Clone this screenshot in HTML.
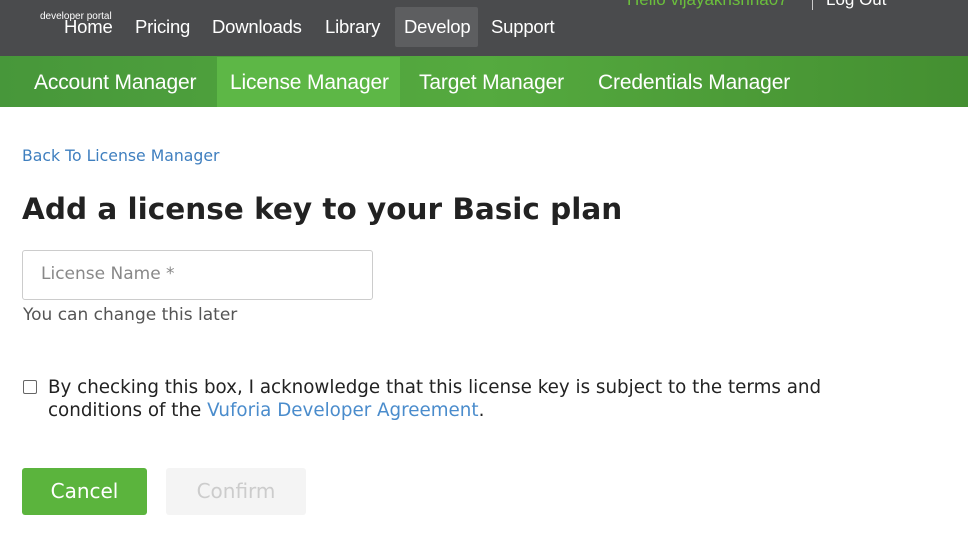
<!DOCTYPE html>
<html><head><meta charset="utf-8"><style>
body{margin:0;width:968px;height:546px;overflow:hidden;background:#fff;font-family:"DejaVu Sans",sans-serif;position:relative}
.top{position:absolute;left:0;top:0;width:968px;height:56px;background:#4a4b4d}
.g{position:absolute;left:0;top:56px;width:968px;height:51px;background:linear-gradient(90deg,#47973a,#55aa3f 50%,#448f31)}
.a{position:absolute;white-space:nowrap}
.nav{color:#fff;font-size:18.5px;top:16px;letter-spacing:-0.2px;font-family:"Liberation Sans",sans-serif}
.sub{color:#fff;font-size:21px;top:71px;letter-spacing:-0.15px;font-family:"Liberation Sans",sans-serif}
</style></head><body>
<div class="top"></div>
<div class="a" style="left:395px;top:7px;width:83px;height:40px;background:#5d5e60;border-radius:2px"></div>
<div class="a nav" style="left:64px">Home</div>
<div class="a" style="left:40px;top:11px;color:#fff;font-size:10px;font-family:'Liberation Sans',sans-serif">developer portal</div>
<div class="a nav" style="left:135px">Pricing</div>
<div class="a nav" style="left:212px">Downloads</div>
<div class="a nav" style="left:325px">Library</div>
<div class="a nav" style="left:404px">Develop</div>
<div class="a nav" style="left:491px">Support</div>
<div class="a" style="left:627px;top:-10px;color:#6bbf3c;font-size:17px;font-family:'Liberation Sans',sans-serif">Hello vijayakrishna07</div>
<div class="a" style="left:812px;top:0;width:1px;height:10px;background:#ccc"></div>
<div class="a" style="left:826px;top:-10px;color:#fff;font-size:17px;font-family:'Liberation Sans',sans-serif">Log Out</div>
<div class="g"></div>
<div class="a" style="left:217px;top:57px;width:183px;height:50px;background:#5db746"></div>
<div class="a sub" style="left:34px">Account Manager</div>
<div class="a sub" style="left:230px">License Manager</div>
<div class="a sub" style="left:419px">Target Manager</div>
<div class="a sub" style="left:598px">Credentials Manager</div>
<div class="a" style="left:22px;top:146px;color:#3f7fbf;font-size:15.7px">Back To License Manager</div>
<div class="a" style="left:22px;top:192px;color:#222;font-size:29.5px;font-weight:bold">Add a license key to your Basic plan</div>
<div class="a" style="left:22px;top:250px;width:349px;height:48px;border:1px solid #ccc;border-radius:3px"></div>
<div class="a" style="left:41px;top:264px;color:#888;font-size:17px">License Name *</div>
<div class="a" style="left:23px;top:305px;color:#555;font-size:17px">You can change this later</div>
<div class="a" style="left:23px;top:380px;width:12px;height:12px;border:1px solid #666;border-radius:2px"></div>
<div class="a" style="left:48px;top:376px;color:#222;font-size:18.3px;line-height:23px">By checking this box, I acknowledge that this license key is subject to the terms and<br>conditions of the <span style="color:#4a8ccc">Vuforia Developer Agreement</span>.</div>
<div class="a" style="left:22px;top:468px;width:125px;height:47px;background:#5bb43d;border-radius:3px;color:#fff;font-size:20px;line-height:47px;text-align:center">Cancel</div>
<div class="a" style="left:166px;top:468px;width:140px;height:47px;background:#f4f4f4;border-radius:3px;color:#ccc;font-size:20px;line-height:47px;text-align:center">Confirm</div>
</body></html>
